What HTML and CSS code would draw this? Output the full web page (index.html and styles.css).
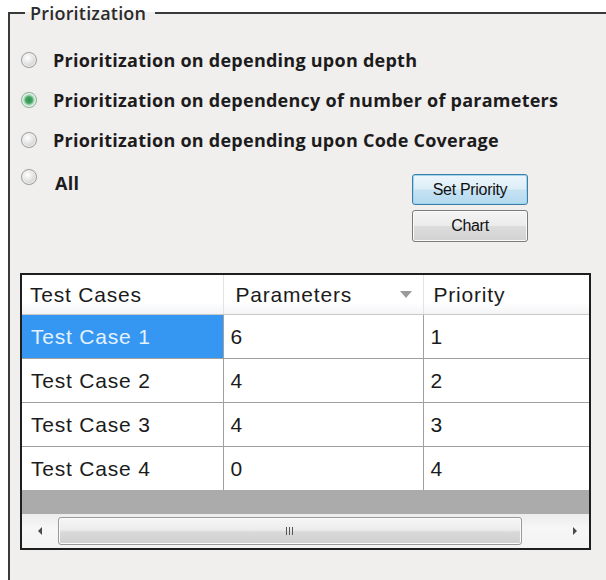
FILE: index.html
```html
<!DOCTYPE html>
<html lang="en">
<head>
<meta charset="utf-8">
<title>Prioritization</title>
<link rel="stylesheet" href="styles.css">
</head>
<body>
<fieldset class="group">
  <legend class="group-title">Prioritization</legend>

  <ul class="options">
    <li class="option"><span class="radio"></span><span class="option-label">Prioritization on depending upon depth</span></li>
    <li class="option"><span class="radio radio-checked"></span><span class="option-label">Prioritization on dependency of number of parameters</span></li>
    <li class="option"><span class="radio"></span><span class="option-label">Prioritization on depending upon Code Coverage</span></li>
  </ul>

  <div class="lower-row">
    <div class="option option-all"><span class="radio"></span><span class="option-label">All</span></div>
    <div class="actions">
      <button class="btn btn-default" type="button">Set Priority</button>
      <button class="btn" type="button">Chart</button>
    </div>
  </div>

  <div class="grid">
    <table class="grid-table">
      <colgroup><col class="col-a"><col class="col-b"><col class="col-c"></colgroup>
      <thead>
        <tr>
          <th>Test Cases</th>
          <th class="sorted">Parameters<span class="sort-glyph"></span></th>
          <th>Priority</th>
        </tr>
      </thead>
      <tbody>
        <tr><td class="selected">Test Case 1</td><td>6</td><td>1</td></tr>
        <tr><td>Test Case 2</td><td>4</td><td>2</td></tr>
        <tr><td>Test Case 3</td><td>4</td><td>3</td></tr>
        <tr><td>Test Case 4</td><td>0</td><td>4</td></tr>
      </tbody>
    </table>
    <div class="grid-empty"></div>
    <div class="hscroll">
      <span class="arrow arrow-left"></span>
      <div class="thumb"><span class="grip"></span></div>
      <span class="arrow arrow-right"></span>
    </div>
  </div>
</fieldset>
</body>
</html>
```

FILE: styles.css
```css
html, body {
  margin: 0;
  background: #ffffff;
}

body {
  width: 606px;
  height: 580px;
  overflow: hidden;
  font-family: "Open Sans", "DejaVu Sans", sans-serif;
}

/* group box */
.group {
  box-sizing: border-box;
  margin: 4px 0 0 8px;
  padding: 18px 0 0 12px;
  min-inline-size: 0;
  height: 576px;
  border: 0;
  border-top: 2px solid #3a3a3a;
  border-left: 2px solid #3a3a3a;
  background: #f1efee;
}

.group-title {
  margin-left: 3px;
  padding: 0 9px 0 5px;
  font-size: 18px;
  font-weight: 600;
  line-height: 18px;
  letter-spacing: 0.2px;
  color: #2b2b2b;
}

/* radio options */
.options {
  list-style: none;
  margin: 0;
  padding: 0;
}

.option {
  display: flex;
  align-items: center;
  height: 40px;
}

.radio {
  flex: none;
  width: 14px;
  height: 14px;
  margin-left: -1px;
  border-radius: 50%;
  border: 1px solid #9f9f9f;
  background: radial-gradient(circle at 40% 35%, #ffffff 0, #e8e8e8 40%, #bdbdbd 100%);
  box-shadow: inset 0 0 0 1px #f0f0f0, 0 0 1px #cfcfcf;
}

.radio-checked {
  border-color: #86b494;
  background: radial-gradient(circle, #2f8f4f 0, #46a864 34%, #9fd3ae 48%, #e3f1e7 70%, #cfe3d5 100%);
}

.option-label {
  margin-left: 16px;
  font-size: 18px;
  font-weight: 700;
  color: #1c1c1c;
  letter-spacing: 0.25px;
}

/* "All" option + action buttons */
.lower-row {
  display: grid;
  grid-template-columns: 390px 116px;
  height: 82px;
}

.option-all {
  align-items: flex-start;
  height: auto;
  padding-top: 9px;
}

.option-all .option-label {
  margin-left: 18px;
  margin-top: 4px;
  line-height: 20px;
}

.actions {
  display: flex;
  flex-direction: column;
  gap: 5px;
  padding-top: 14px;
}

.btn {
  height: 32px;
  margin: 0;
  padding: 0;
  border: 1px solid #7a7a7a;
  border-radius: 3px;
  background: linear-gradient(#f4f4f4 0, #ececec 48%, #dcdcdc 52%, #d2d2d2 100%);
  box-shadow: inset 0 0 0 1px #fbfbfb;
  font-family: "Liberation Sans", Arial, sans-serif;
  font-size: 16px;
  letter-spacing: -0.3px;
  color: #111;
}

.btn-default {
  height: 31px;
  border-color: #3d7ea6;
  background: linear-gradient(#edf6fb 0, #dcedf7 48%, #c5e2f3 52%, #b4d9ee 100%);
  box-shadow: inset 0 0 0 1px #9fd6ef;
}

/* data grid */
.grid {
  width: 567px;
  margin: 31px 0 0 -2px;
  border: 2px solid #1e1e1e;
  background: #ababab;
}

.grid-table {
  width: 100%;
  border-collapse: collapse;
  table-layout: fixed;
  background: #ffffff;
  font-family: "Liberation Sans", Arial, sans-serif;
  font-size: 21px;
  letter-spacing: 0.8px;
  color: #1b1b1b;
}

.col-a { width: 201px; }
.col-b { width: 200px; }

.grid-table th {
  height: 39px;
  padding: 0 0 0 10px;
  text-align: left;
  font-weight: 400;
  background: linear-gradient(#ffffff 0, #ffffff 70%, #f3f4f6 100%);
  border-right: 1px solid #e3e3e3;
  border-bottom: 1px solid #c8c8c8;
}

.grid-table th:first-child {
  padding-left: 8px;
}

.grid-table th:last-child {
  border-right: 0;
}

.sorted {
  position: relative;
  padding-left: 12px !important;
}

.sort-glyph {
  position: absolute;
  right: 11px;
  top: 16px;
  width: 0;
  height: 0;
  border-left: 6px solid transparent;
  border-right: 6px solid transparent;
  border-top: 7px solid #9a9a9a;
}

.grid-table td {
  height: 43px;
  padding: 0 0 0 7px;
  border-right: 1px solid #a0a0a0;
  border-bottom: 1px solid #a0a0a0;
}

.grid-table td:first-child {
  padding-left: 9px;
}

.grid-table td:last-child {
  border-right: 0;
}

.grid-table tr:last-child td {
  border-bottom: 0;
}

.grid-table td.selected {
  background: #3697f2;
  color: #e4f2ff;
}

.grid-empty {
  height: 24px;
  background: #ababab;
}

/* horizontal scroll bar */
.hscroll {
  display: flex;
  align-items: center;
  height: 34px;
  background: linear-gradient(#ececec, #f6f6f6 40%, #f3f3f3);
}

.arrow {
  flex: none;
  display: flex;
  align-items: center;
  justify-content: center;
  width: 36px;
  height: 100%;
}

.arrow::before {
  content: "";
  width: 0;
  height: 0;
  border-top: 4px solid transparent;
  border-bottom: 4px solid transparent;
}

.arrow-left::before {
  border-right: 4px solid #4a4a4a;
}

.arrow-right {
  width: 67px;
  margin-left: auto;
}

.arrow-right::before {
  border-left: 4px solid #4a4a4a;
  margin-left: 38px;
}

.thumb {
  flex: none;
  display: flex;
  align-items: center;
  justify-content: center;
  width: 464px;
  height: 28px;
  box-sizing: border-box;
  border: 1px solid #9a9a9a;
  border-radius: 3px;
  background: linear-gradient(#f6f6f6 0, #ececec 45%, #d9d9d9 55%, #cfcfcf 100%);
  box-shadow: inset 0 0 0 1px #fafafa;
}

.grip {
  width: 8px;
  height: 8px;
  background: repeating-linear-gradient(90deg, #555 0 1px, transparent 1px 3px);
}
```
